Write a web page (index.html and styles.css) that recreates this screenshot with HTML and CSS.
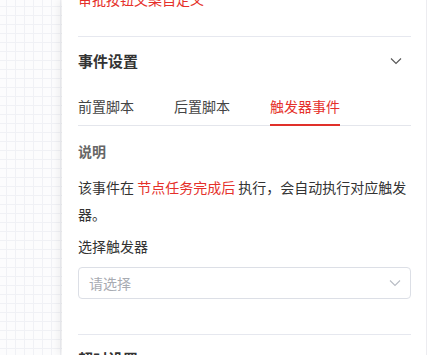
FILE: index.html
```html
<!DOCTYPE html>
<html lang="zh">
<head>
<meta charset="utf-8">
<link rel="stylesheet" href="styles.css">
</head>
<body>
<div class="canvas">
  <aside class="panel">
    <div class="panel-body">
      <p class="top-note">审批按钮文案自定义</p>
      <div class="divider first"></div>
      <div class="section-head">
        <span class="section-title">事件设置</span>
        <svg class="chev" width="12" height="8" viewBox="0 0 12 8"><path d="M1 1.5 L6 6.5 L11 1.5" fill="none" stroke="#555" stroke-width="1.1"/></svg>
      </div>
      <div class="tabs">
        <span class="tab">前置脚本</span>
        <span class="tab">后置脚本</span>
        <span class="tab active">触发器事件</span>
      </div>
      <div class="pane">
        <div class="sub-title">说明</div>
        <p class="desc">该事件在&nbsp;<span class="hl">节点任务完成后</span>&nbsp;执行，会自动执行对应触发器。</p>
        <div class="label">选择触发器</div>
        <div class="select">
          <span class="placeholder">请选择</span>
          <svg class="chev" width="12" height="8" viewBox="0 0 12 8"><path d="M1 1.5 L6 6.5 L11 1.5" fill="none" stroke="#b8bcc4" stroke-width="1.1"/></svg>
        </div>
      </div>
      <div class="divider second"></div>
      <div class="section-head">
        <span class="section-title">超时设置</span>
      </div>
    </div>
  </aside>
</div>
</body>
</html>
```

FILE: styles.css
```css
* { box-sizing: border-box; }
html, body {
  margin: 0;
  padding: 0;
  height: 100%;
  overflow: hidden;
}
body {
  font-family: "Noto Sans CJK SC", "Noto Sans", sans-serif;
  background-color: #fcfcfd;
  background-image:
    linear-gradient(to right, #f0f1f5 1px, transparent 1px),
    linear-gradient(to bottom, #f0f1f5 1px, transparent 1px);
  background-size: 9px 9px;
  background-position: 6px 6px;
}
.canvas {
  display: flex;
  justify-content: flex-end;
  height: 100%;
}
.panel {
  width: 365px;
  height: 100%;
  background: #fff;
  border-right: 1px solid #ececf0;
  box-shadow: -3px 0 8px rgba(0, 0, 0, 0.07);
}
.panel-body {
  padding: 0 15px 0 16px;
  margin-top: -12px;
}
.top-note {
  margin: 0;
  font-size: 14px;
  line-height: 22px;
  color: #e5302a;
}
.divider {
  height: 1px;
  background: #e6e8ef;
}
.divider.first { margin-top: 26px; }
.divider.second { margin-top: 35px; }
.section-head {
  height: 47px;
  display: flex;
  align-items: center;
  justify-content: space-between;
  padding-right: 9px;
}
.section-title {
  font-size: 15px;
  font-weight: 700;
  color: #333;
}
.tabs {
  display: flex;
  align-items: flex-start;
  gap: 40px;
  height: 42px;
  border-bottom: 1px solid #e4e6ec;
}
.tab {
  font-size: 14px;
  line-height: 22px;
  padding: 11px 0 7px;
  color: #444;
  border-bottom: 2px solid transparent;
}
.tab.active {
  color: #e5302a;
  border-bottom-color: #e0302a;
}
.pane {
  padding-top: 14px;
}
.sub-title {
  font-size: 14px;
  font-weight: 700;
  line-height: 22px;
  color: #666;
}
.desc {
  margin: 12px 0 0;
  font-size: 14px;
  line-height: 27px;
  color: #333;
}
.hl { color: #e5302a; }
.label {
  margin-top: 7px;
  font-size: 14px;
  line-height: 22px;
  color: #333;
}
.select {
  margin-top: 10px;
  height: 32px;
  border: 1px solid #dcdfe6;
  border-radius: 4px;
  display: flex;
  align-items: center;
  justify-content: space-between;
  padding: 0 9px 0 10px;
}
.placeholder {
  font-size: 14px;
  color: #a8abb2;
}
```
